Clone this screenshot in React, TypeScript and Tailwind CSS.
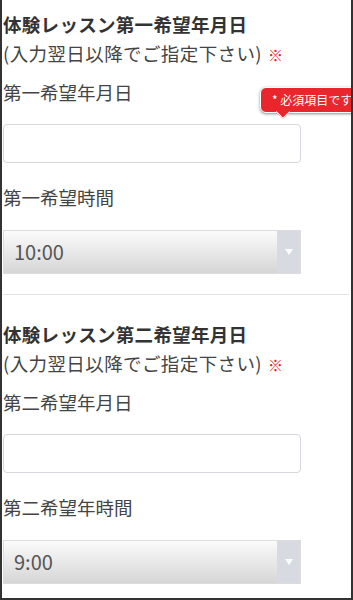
import React from 'react';

const font = { fontFamily: '"Noto Sans CJK JP", "Noto Sans", sans-serif' };

function DateInput() {
  return <div className="h-[39px] w-[298px] rounded-[4px] border border-[#d6d6dc] bg-white" />;
}

function TimeSelect({ value }: { value: string }) {
  return (
    <div className="flex h-[44px] w-[298px] border border-[#dcdcdc] bg-gradient-to-b from-[#fbfbfb] to-[#d6d6d6]">
      <div className="flex flex-1 items-center pl-[10px] text-[20px] text-[#555]">{value}</div>
      <div className="flex w-[23px] items-center justify-center bg-[#d7dbe1]">
        <svg width="8" height="6" viewBox="0 0 8 6">
          <path d="M0 0h8L4 6z" fill="#fff" />
        </svg>
      </div>
    </div>
  );
}

function Block({
  num,
  dateLabel,
  timeLabel,
  time,
  showTip,
}: {
  num: string;
  dateLabel: string;
  timeLabel: string;
  time: string;
  showTip?: boolean;
}) {
  return (
    <div className="relative">
      <h2 className="text-[18.5px] font-bold leading-[29px] tracking-[0.3px] text-[#333]">
        体験レッスン第{num}希望年月日
      </h2>
      <p className="text-[18.5px] leading-[29px] tracking-[0.4px] text-[#444]">
        (入力翌日以降でご指定下さい)
        <span className="ml-[6px] text-[15px] text-[#e0262b]">※</span>
      </p>
      <p className="mt-[9px] text-[18.5px] leading-[28px] text-[#444]">{dateLabel}</p>
      <div className="mt-[18px]">
        <DateInput />
      </div>
      <p className="mt-[20px] text-[18.5px] leading-[28px] text-[#444]">{timeLabel}</p>
      <div className="mt-[19px]">
        <TimeSelect value={time} />
      </div>

      {showTip && (
        <div className="absolute left-[257px] top-[77px]">
          <div className="relative rounded-[6px] border border-white bg-[#e8262b] px-[11px] py-[4px] text-[12px] leading-[16px] whitespace-nowrap text-white shadow-[0_1px_3px_rgba(0,0,0,0.45)]">
            * 必須項目です
            <div className="absolute left-[17px] top-[19px] h-[10px] w-[10px] rotate-45 border-b border-r border-white bg-[#e8262b]" />
          </div>
        </div>
      )}
    </div>
  );
}

export default function App() {
  return (
    <div
      className="h-[600px] w-[353px] overflow-hidden border-b-2 border-l-2 border-r-2 border-[#333] bg-white pl-[1px]"
      style={font}
    >
      <div className="pt-[10px]">
        <Block num="一" dateLabel="第一希望年月日" timeLabel="第一希望時間" time="10:00" showTip />
      </div>
      <div className="mt-[20px] mr-[2px] h-px bg-[#e2e2e4]" />
      <div className="pt-[25px]">
        <Block num="二" dateLabel="第二希望年月日" timeLabel="第二希望年時間" time="9:00" />
      </div>
    </div>
  );
}
